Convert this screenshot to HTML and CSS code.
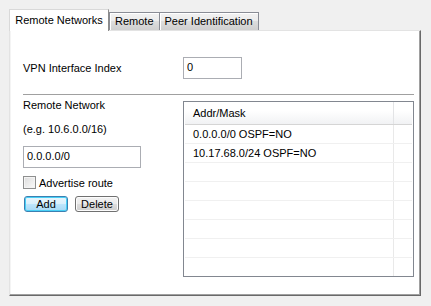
FILE: index.html
```html
<!DOCTYPE html>
<html lang="en">
<head>
  <meta charset="UTF-8">
  <title>Remote Networks</title>
  <link rel="stylesheet" href="styles.css">
</head>
<body>
  <div class="tabs">
    <div class="tab active">Remote Networks</div>
    <div class="tab">Remote</div>
    <div class="tab">Peer Identification</div>
  </div>

  <div class="panel">
    <!-- VPN index row -->
    <div class="row">
      <label class="label" for="vpn-index">VPN Interface Index</label>
      <input class="field index-field" id="vpn-index" type="text" value="0">
    </div>

    <div class="separator"></div>

    <div class="networks">
      <div class="left-col">
        <p class="text">Remote Network</p>
        <p class="text hint">(e.g. 10.6.0.0/16)</p>
        <input class="field net-field" type="text" value="0.0.0.0/0">
        <label class="check">
          <span class="box"></span>
          Advertise route
        </label>
        <div class="buttons">
          <button class="btn default" type="button">Add</button>
          <button class="btn" type="button">Delete</button>
        </div>
      </div>

      <div class="listbox">
        <div class="list-head">
          <span class="col-main">Addr/Mask</span>
          <span class="col-rest"></span>
        </div>
        <div class="list-row"><span class="col-main">0.0.0.0/0 OSPF=NO</span><span class="col-rest"></span></div>
        <div class="list-row"><span class="col-main">10.17.68.0/24 OSPF=NO</span><span class="col-rest"></span></div>
        <div class="list-row"><span class="col-main"></span><span class="col-rest"></span></div>
        <div class="list-row"><span class="col-main"></span><span class="col-rest"></span></div>
        <div class="list-row"><span class="col-main"></span><span class="col-rest"></span></div>
        <div class="list-row"><span class="col-main"></span><span class="col-rest"></span></div>
        <div class="list-row"><span class="col-main"></span><span class="col-rest"></span></div>
        <div class="list-row last"><span class="col-main"></span><span class="col-rest"></span></div>
      </div>
    </div>
  </div>
</body>
</html>
```

FILE: styles.css
```css
/* Basic Reset */
* {
  margin: 0;
  padding: 0;
  box-sizing: border-box;
  font-family: "Liberation Sans", Arial, sans-serif;
  font-size: 11px;
  color: #000;
}

body {
  background-color: #f0f0f0;
  padding: 9px 0 0 9px;
  width: 431px;
  height: 306px;
  overflow: hidden;
}

/* Tab strip */
.tabs {
  display: flex;
  align-items: flex-end;
  height: 21px;
}

.tab {
  height: 18px;
  line-height: 16px;
  padding: 0 5px;
  border: 1px solid #898c95;
  border-bottom: none;
  background: linear-gradient(#f2f2f2, #ebebeb 50%, #dddddd 50%, #cfcfcf);
  box-shadow: inset 1px 1px 0 #fff;
}

.tab + .tab {
  margin-left: -1px;
}

.tab.active {
  position: relative;
  z-index: 1;
  width: 100px;
  height: 22px;
  line-height: 20px;
  text-align: center;
  margin-bottom: -1px;
  background: #fff;
  border-color: #d9d9d9 #8c8c8c #fff #d9d9d9;
  box-shadow: none;
}

.tab.active + .tab {
  margin-left: 0;
}

/* Page panel */
.panel {
  width: 412px;
  height: 266px;
  background: #fff;
  border-top: 1px solid #e3e3e3;
  border-left: 1px solid #e3e3e3;
  border-right: 1px solid #696969;
  border-bottom: 1px solid #696969;
  box-shadow: inset -1px -1px 0 #a0a0a0, inset 1px 0 0 #f4f4f4;
  padding: 26px 6px 0 13px;
}

.row {
  display: flex;
  align-items: center;
}

.label {
  width: 160px;
}

.field {
  height: 22px;
  border: 1px solid #abadb3;
  padding: 0 3px 2px;
  background: #fff;
  outline: none;
}

.index-field {
  width: 59px;
}

.separator {
  margin-top: 15px;
  height: 2px;
  border-top: 1px solid #a0a0a0;
  border-bottom: 1px solid #fff;
}

/* Remote networks section */
.networks {
  display: flex;
  margin-top: 2px;
}

.left-col {
  width: 160px;
  display: flex;
  flex-direction: column;
  align-items: flex-start;
}

.text {
  line-height: 13px;
  margin-top: 1px;
}

.hint {
  margin-top: 11px;
}

.net-field {
  width: 118px;
  margin-top: 10px;
}

.check {
  display: flex;
  align-items: center;
  margin-top: 8px;
  height: 13px;
}

.box {
  width: 13px;
  height: 13px;
  border: 1px solid #8e8f8f;
  background: linear-gradient(135deg, #dcdcdc, #fbfbfb);
  box-shadow: inset 0 0 0 1px #f4f4f4;
  margin-right: 3px;
}

.buttons {
  display: flex;
  gap: 7px;
  margin-top: 7px;
  margin-left: 1px;
}

.btn {
  width: 44px;
  height: 16px;
  line-height: 13px;
  border: 1px solid #707070;
  border-radius: 3px;
  background: linear-gradient(#f2f2f2, #ebebeb 50%, #dddddd 50%, #cfcfcf);
  box-shadow: inset 0 0 0 1px #fcfcfc;
}

.btn.default {
  border-color: #3c7fb1;
  background: linear-gradient(#eaf6fd, #d9f0fc 50%, #bee6fd 50%, #a7d9f5);
  box-shadow: inset 0 0 0 1px #48d0f6;
}

/* List view */
.listbox {
  width: 231px;
  height: 176px;
  margin-top: 3px;
  border: 1px solid #828790;
  padding: 0 1px;
  overflow: hidden;
}

.list-head,
.list-row {
  display: flex;
}

.list-head {
  height: 23px;
  line-height: 22px;
  background: linear-gradient(#fff, #fff 40%, #f1f2f4);
  border-bottom: 1px solid #d5d5d5;
}

.list-row {
  height: 19px;
  line-height: 19px;
  border-bottom: 1px solid #f0f0f0;
}

.col-main {
  width: 209px;
  padding-left: 8px;
  border-right: 1px solid #e9e9e9;
  white-space: nowrap;
}

.list-head .col-main {
  border-right-color: #e3e4e6;
}

.col-rest {
  flex: 1;
}
```
